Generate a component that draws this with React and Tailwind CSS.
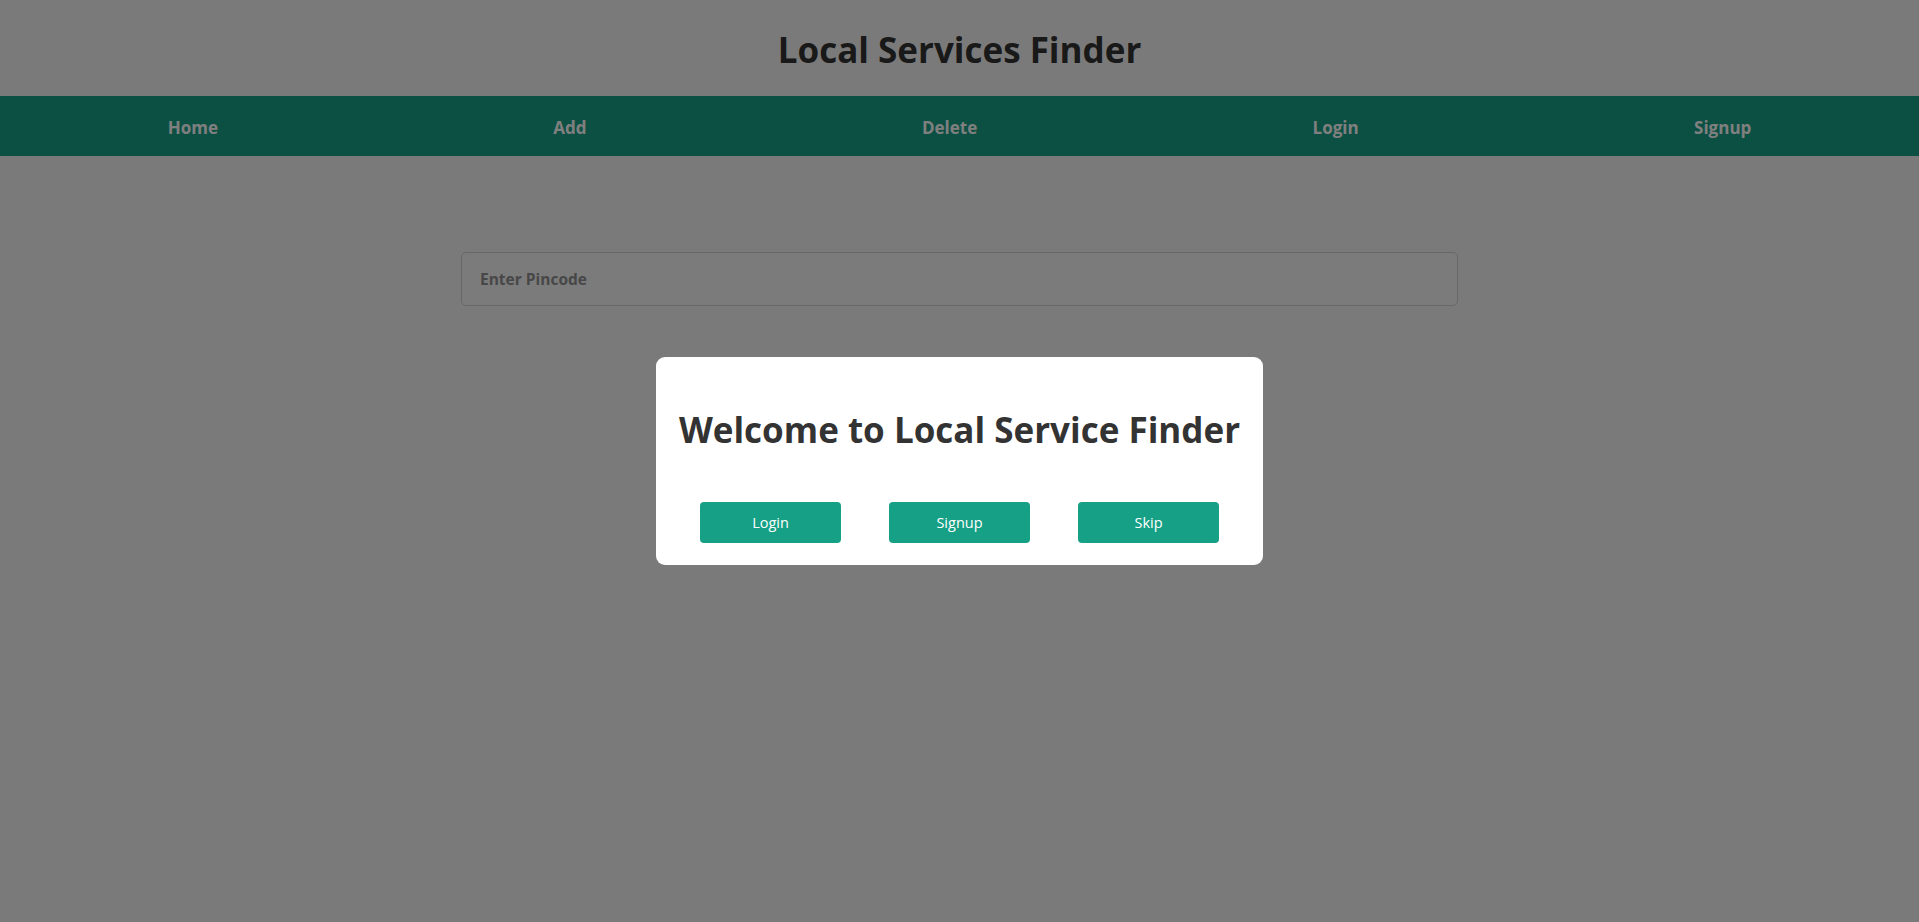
import React, { useState } from 'react';

const navLinks = ['Home', 'Add', 'Delete', 'Login', 'Signup'];

const App = () => {
  const [pincode, setPincode] = useState('');
  const [showModal, setShowModal] = useState(true);

  return (
    <div className="min-h-screen bg-[#f5f5f5] font-['Open_Sans',sans-serif]">
      {/* Header */}
      <header className="h-[96px] flex items-center justify-center pt-1">
        <h1 className="text-[35px] font-bold text-[#333]">Local Services Finder</h1>
      </header>

      {/* Navbar */}
      <nav className="h-[60px] bg-[#16a085] flex items-center justify-around pt-1">
        {navLinks.map((link) => (
          <a key={link} href="#" className="text-white font-bold text-[17px]">
            {link}
          </a>
        ))}
      </nav>

      {/* Search */}
      <div className="pt-[96px] flex justify-center">
        <input
          type="text"
          value={pincode}
          onChange={(e) => setPincode(e.target.value)}
          placeholder="Enter Pincode"
          className="w-[997px] h-[54px] border border-[#cfcfcf] rounded-[5px] bg-[#f7f7f7] pl-[18px] text-[15.5px] font-bold text-[#555] placeholder:text-[#8f8f8f] outline-none"
        />
      </div>

      {/* Welcome modal */}
      {showModal && (
        <div className="fixed inset-0 bg-black/50 flex items-center justify-center">
          <div className="w-[607px] h-[208px] bg-white rounded-[9px] px-5 pt-[54px] pb-[22px] flex flex-col">
            <h2 className="text-[35px] font-bold text-[#333] text-center leading-[1.1]">Welcome to Local Service Finder</h2>
            <div className="mt-auto flex justify-around">
              <button onClick={() => setShowModal(false)} className="w-[141px] h-[41px] bg-[#16a085] text-white text-[14.5px] rounded-[4px]">Login</button>
              <button onClick={() => setShowModal(false)} className="w-[141px] h-[41px] bg-[#16a085] text-white text-[14.5px] rounded-[4px]">Signup</button>
              <button onClick={() => setShowModal(false)} className="w-[141px] h-[41px] bg-[#16a085] text-white text-[14.5px] rounded-[4px]">Skip</button>
            </div>
          </div>
        </div>
      )}
    </div>
  );
};

export default App;
